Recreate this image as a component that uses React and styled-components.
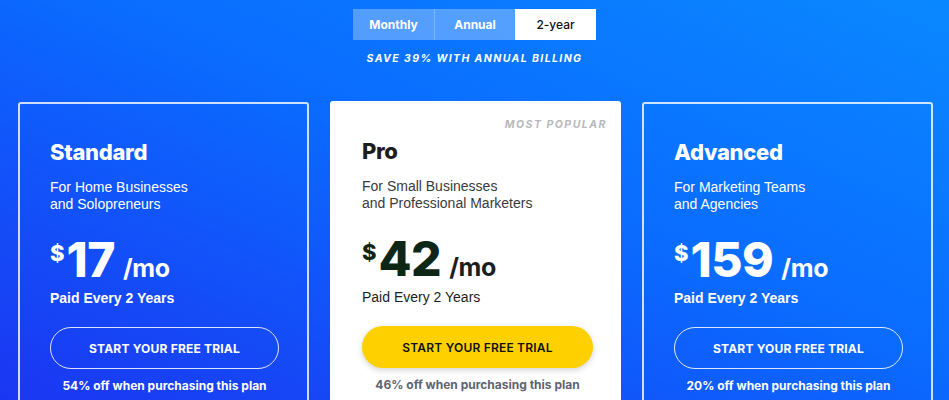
import React from 'react';
import styled, { createGlobalStyle } from 'styled-components';

const GlobalStyle = createGlobalStyle`
  html, body {
    margin: 0;
    padding: 0;
  }
  body {
    font-family: 'Liberation Sans', Arial, sans-serif;
    background: linear-gradient(to top right, #1b36f2 0%, #0a6cff 55%, #0a88ff 100%);
    min-height: 400px;
    overflow: hidden;
  }
`;

const Page = styled.div`
  height: 400px;
  overflow: hidden;
  display: flex;
  flex-direction: column;
  align-items: center;
  padding-top: 9px;
  box-sizing: border-box;
`;

const Toggle = styled.div`
  display: flex;
`;

const Segment = styled.button`
  width: 81px;
  height: 31px;
  border: 0;
  border-left: ${p => (p.$divider ? '1px solid rgba(255,255,255,0.25)' : '0')};
  background: ${p => (p.$active ? '#ffffff' : 'rgba(255,255,255,0.3)')};
  color: ${p => (p.$active ? '#111' : '#fff')};
  font-family: 'Inter', sans-serif;
  font-size: 12px;
  font-weight: ${p => (p.$active ? 500 : 700)};
  padding: 0;
  cursor: pointer;
`;

const SaveNote = styled.div`
  margin-top: 12px;
  color: #fff;
  font-family: 'Inter', sans-serif;
  font-size: 10.5px;
  font-weight: 700;
  font-style: italic;
  letter-spacing: 1.4px;
  line-height: 14px;
`;

const Cards = styled.div`
  align-self: stretch;
  display: grid;
  grid-template-columns: repeat(3, 291px);
  column-gap: 21px;
  padding-left: 18px;
  margin-top: 36px;
  align-items: start;
`;

const Card = styled.div`
  position: relative;
  height: 310px;
  box-sizing: border-box;
  border-radius: 3px;
  padding: 35px 0 0 30px;
  margin-top: ${p => (p.$featured ? '-1px' : '0')};
  background: ${p => (p.$featured ? '#fff' : 'transparent')};
  border: 2px solid ${p => (p.$featured ? '#fff' : 'rgba(255,255,255,0.8)')};
  color: ${p => (p.$featured ? '#1d1d1f' : '#fff')};
`;

const Badge = styled.div`
  position: absolute;
  top: 15px;
  right: 12px;
  color: #b8b8bc;
  font-family: 'Inter', sans-serif;
  font-size: 10.5px;
  font-weight: 700;
  font-style: italic;
  letter-spacing: 1.5px;
`;

const Title = styled.h2`
  margin: 0;
  font-family: 'Inter', sans-serif;
  font-size: 22px;
  font-weight: 800;
  line-height: 26px;
  letter-spacing: -0.3px;
`;

const Subtitle = styled.p`
  margin: 14px 0 0;
  font-size: 14px;
  line-height: 17px;
  color: ${p => (p.$featured ? '#3a3a3c' : '#fff')};
`;

const PriceRow = styled.div`
  display: flex;
  align-items: baseline;
  margin-top: 23px;
  height: 48px;
  font-family: 'Inter', sans-serif;
  color: ${p => (p.$featured ? '#0d2615' : '#fff')};
`;

const Currency = styled.span`
  align-self: flex-start;
  font-size: 22px;
  font-weight: 800;
  line-height: 22px;
  margin-top: 6px;
  margin-right: 2px;
`;

const Amount = styled.span`
  font-size: 48px;
  font-weight: 800;
  line-height: 48px;
  letter-spacing: -0.5px;
`;

const Period = styled.span`
  font-size: 25px;
  font-weight: 700;
  margin-left: 8px;
  letter-spacing: -0.3px;
  color: ${p => (p.$featured ? '#1d1d1f' : '#fff')};
`;

const Paid = styled.div`
  margin-top: 5px;
  font-size: 14px;
  line-height: 18px;
  font-weight: ${p => (p.$featured ? 400 : 700)};
`;

const TrialButton = styled.button`
  display: block;
  margin-top: 20px;
  width: ${p => (p.$featured ? '231px' : '229px')};
  height: 42px;
  border-radius: 21px;
  box-sizing: border-box;
  border: ${p => (p.$featured ? '0' : '1.5px solid rgba(255,255,255,0.85)')};
  background: ${p => (p.$featured ? '#ffd000' : 'transparent')};
  box-shadow: ${p => (p.$featured ? '0 2px 6px rgba(0,0,0,0.18)' : 'none')};
  color: ${p => (p.$featured ? '#111' : '#fff')};
  font-family: 'Inter', sans-serif;
  font-size: 12px;
  font-weight: ${p => (p.$featured ? 600 : 700)};
  letter-spacing: 0.2px;
  cursor: pointer;
`;

const Discount = styled.div`
  margin-top: 9px;
  width: ${p => (p.$featured ? '231px' : '229px')};
  text-align: center;
  font-family: 'Inter', sans-serif;
  font-size: 12px;
  font-weight: 700;
  line-height: 16px;
  color: ${p => (p.$featured ? '#5d6470' : '#fff')};
`;

const plans = [
  {
    name: 'Standard',
    lines: ['For Home Businesses', 'and Solopreneurs'],
    price: '17',
    off: '54%',
  },
  {
    name: 'Pro',
    lines: ['For Small Businesses', 'and Professional Marketers'],
    price: '42',
    off: '46%',
    featured: true,
  },
  {
    name: 'Advanced',
    lines: ['For Marketing Teams', 'and Agencies'],
    price: '159',
    off: '20%',
  },
];

export default function App() {
  return (
    <>
      <GlobalStyle />
      <Page>
        <Toggle>
          <Segment>Monthly</Segment>
          <Segment $divider>Annual</Segment>
          <Segment $active>2-year</Segment>
        </Toggle>
        <SaveNote>SAVE 39% WITH ANNUAL BILLING</SaveNote>

        <Cards>
          {plans.map(plan => (
            <Card key={plan.name} $featured={plan.featured}>
              {plan.featured && <Badge>MOST POPULAR</Badge>}
              <Title>{plan.name}</Title>
              <Subtitle $featured={plan.featured}>
                {plan.lines[0]}
                <br />
                {plan.lines[1]}
              </Subtitle>
              <PriceRow $featured={plan.featured}>
                <Currency>$</Currency>
                <Amount>{plan.price}</Amount>
                <Period $featured={plan.featured}>/mo</Period>
              </PriceRow>
              <Paid $featured={plan.featured}>Paid Every 2 Years</Paid>
              <TrialButton $featured={plan.featured}>START YOUR FREE TRIAL</TrialButton>
              <Discount $featured={plan.featured}>
                {plan.off} off when purchasing this plan
              </Discount>
            </Card>
          ))}
        </Cards>
      </Page>
    </>
  );
}
